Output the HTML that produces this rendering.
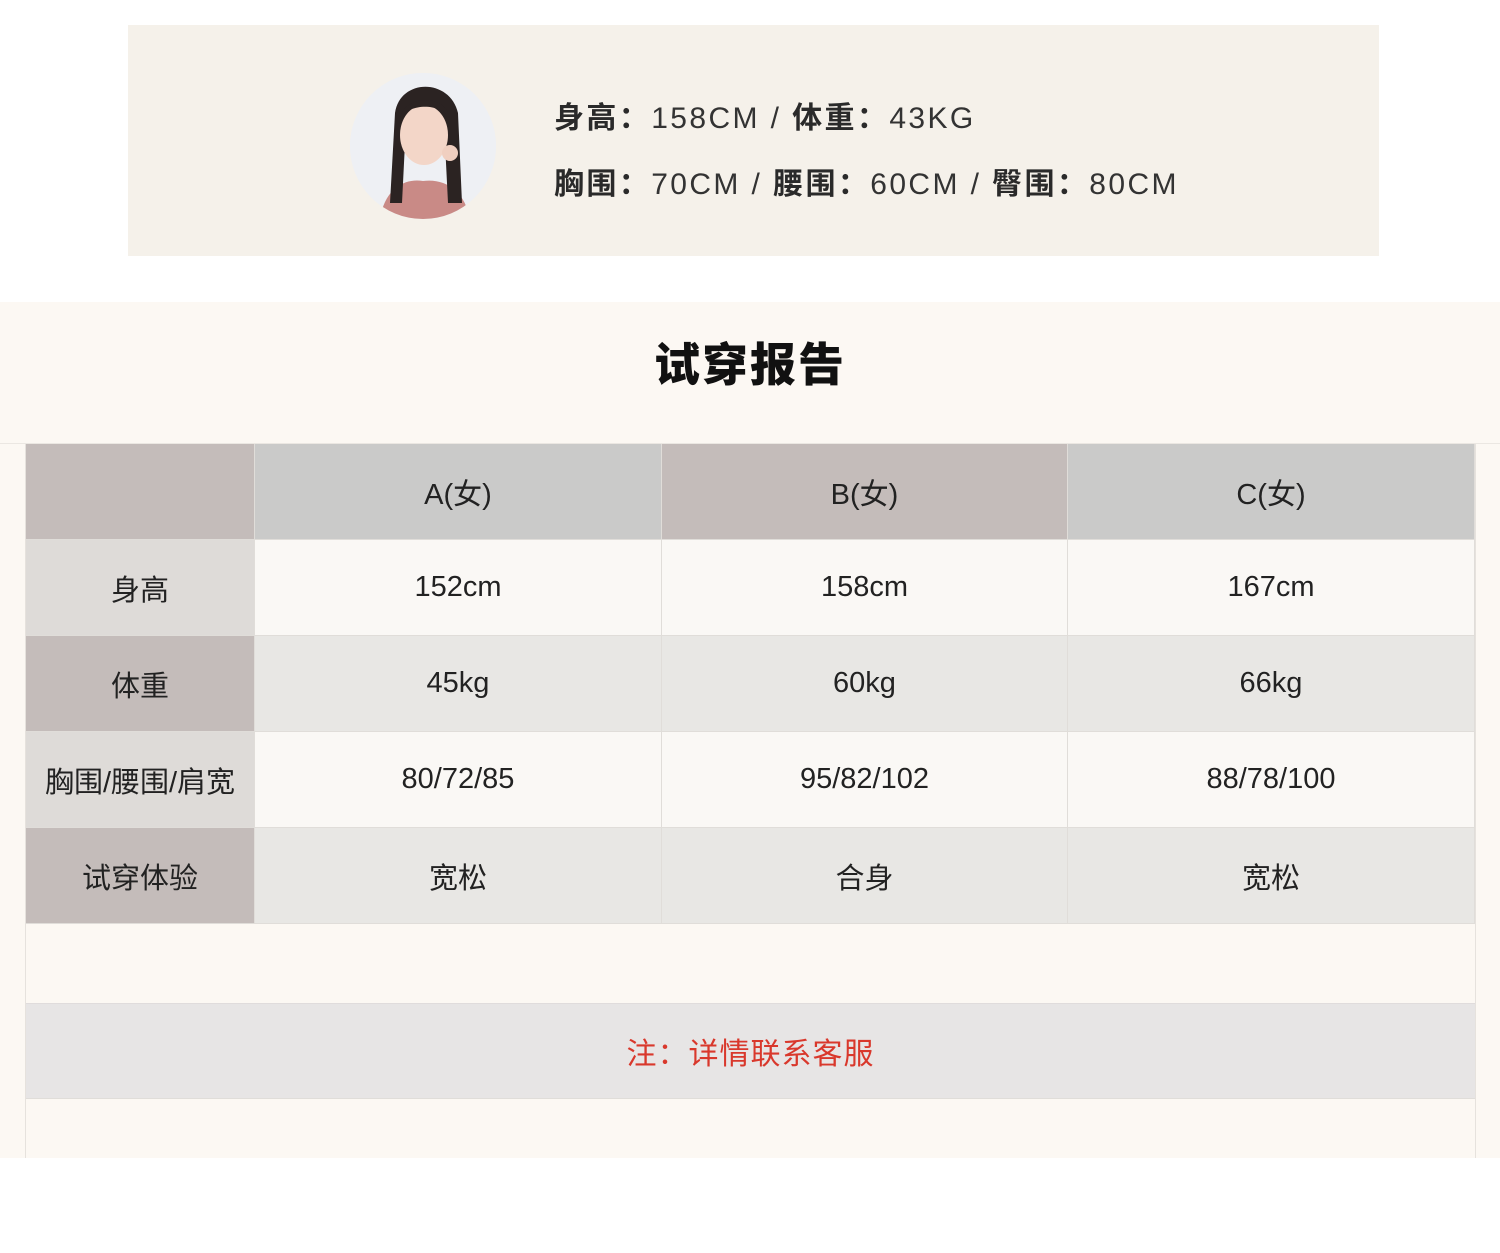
<!DOCTYPE html>
<html><head><meta charset="utf-8"><style>
*{margin:0;padding:0;box-sizing:border-box}
body{width:1500px;height:1253px;background:#fff;position:relative;overflow:hidden;font-family:"Liberation Sans","Noto Sans CJK SC",sans-serif;color:#222}
.card{position:absolute;left:128px;top:25px;width:1251px;height:231px;background:#f5f1ea}
.av{position:absolute;left:350px;top:73px;width:146px;height:146px;border-radius:50%;overflow:hidden;background:#eef0f3}
.info{position:absolute;left:554px;font-size:30px;letter-spacing:2.4px;color:#333;white-space:nowrap}
.info b{font-weight:700;color:#2a2a2a}
.sec{position:absolute;left:0;top:302px;width:1500px;height:856px;background:#fcf8f3}
h1{position:absolute;left:0;top:329px;width:1500px;text-align:center;font-size:46px;font-weight:900;color:#111;letter-spacing:2px;font-family:"Noto Sans CJK SC",sans-serif}
.c{position:absolute;display:flex;align-items:center;justify-content:center;font-size:29px;color:#222;border-right:1px solid #e0ddd9;border-bottom:1px solid #e0ddd9}
.frame{position:absolute;left:25px;top:444px;width:1451px;height:714px;border-left:1px solid #e6e2dd;border-right:1px solid #e6e2dd}
.topline{position:absolute;left:0;top:443px;width:1500px;height:1px;background:#ebe7e2}
</style></head><body>
<div class="card"></div>
<div class="av"><svg width="146" height="146" viewBox="0 0 146 146">
<rect width="146" height="146" fill="#eef0f4"/>
<path d="M30 146 C35 115 55 105 73 108 C95 105 115 118 120 146Z" fill="#c98a86"/>
<path d="M45 40 C50 5 100 5 108 40 L112 130 L98 130 L95 70 L55 70 L52 130 L40 130Z" fill="#2b2322"/>
<ellipse cx="74" cy="62" rx="24" ry="30" fill="#f3d6c8"/>
<path d="M50 45 C55 22 95 20 100 45 C90 30 60 30 50 45Z" fill="#2b2322"/>
<circle cx="100" cy="80" r="8" fill="#f0cfc0"/>
</svg></div>
<div class="info" style="top:93px"><b>身高：</b>158CM / <b>体重：</b>43KG</div>
<div class="info" style="top:159px"><b>胸围：</b>70CM / <b>腰围：</b>60CM / <b>臀围：</b>80CM</div>
<div class="sec"></div>
<div class="topline"></div>
<h1>试穿报告</h1>
<div class="frame"></div>

<div class="c" style="left:26px;top:444px;width:229px;height:96px;background:#c4bcba"></div>
<div class="c" style="left:255px;top:444px;width:407px;height:96px;background:#cacac9">A(女)</div>
<div class="c" style="left:662px;top:444px;width:406px;height:96px;background:#c4bcba">B(女)</div>
<div class="c" style="left:1068px;top:444px;width:407px;height:96px;background:#cacac9">C(女)</div>

<div class="c" style="left:26px;top:540px;width:229px;height:96px;background:#dedbd8">身高</div>
<div class="c" style="left:255px;top:540px;width:407px;height:96px;background:#faf8f5">152cm</div>
<div class="c" style="left:662px;top:540px;width:406px;height:96px;background:#faf8f5">158cm</div>
<div class="c" style="left:1068px;top:540px;width:407px;height:96px;background:#faf8f5">167cm</div>

<div class="c" style="left:26px;top:636px;width:229px;height:96px;background:#c4bcba">体重</div>
<div class="c" style="left:255px;top:636px;width:407px;height:96px;background:#e8e7e4">45kg</div>
<div class="c" style="left:662px;top:636px;width:406px;height:96px;background:#e8e7e4">60kg</div>
<div class="c" style="left:1068px;top:636px;width:407px;height:96px;background:#e8e7e4">66kg</div>

<div class="c" style="left:26px;top:732px;width:229px;height:96px;background:#dedbd8">胸围/腰围/肩宽</div>
<div class="c" style="left:255px;top:732px;width:407px;height:96px;background:#faf8f5">80/72/85</div>
<div class="c" style="left:662px;top:732px;width:406px;height:96px;background:#faf8f5">95/82/102</div>
<div class="c" style="left:1068px;top:732px;width:407px;height:96px;background:#faf8f5">88/78/100</div>

<div class="c" style="left:26px;top:828px;width:229px;height:96px;background:#c4bcba">试穿体验</div>
<div class="c" style="left:255px;top:828px;width:407px;height:96px;background:#e8e7e4">宽松</div>
<div class="c" style="left:662px;top:828px;width:406px;height:96px;background:#e8e7e4">合身</div>
<div class="c" style="left:1068px;top:828px;width:407px;height:96px;background:#e8e7e4">宽松</div>

<div class="c" style="left:26px;top:1003px;width:1449px;height:96px;background:#e7e5e5;color:#d9382c;border-right:none;border-top:1px solid #e0dcdc;font-size:30px;letter-spacing:1px">注：详情联系客服</div>
</body></html>
